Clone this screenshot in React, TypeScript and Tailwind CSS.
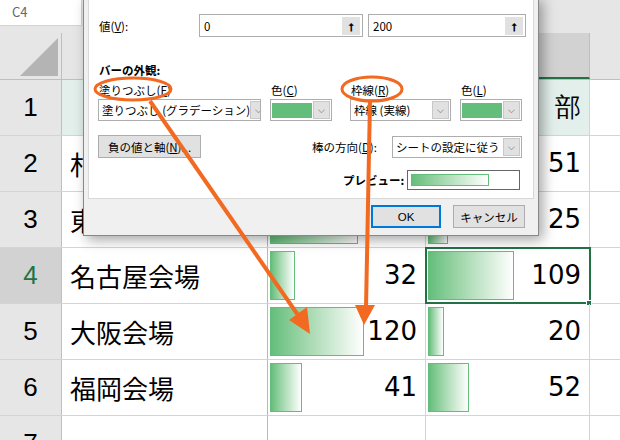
import React from "react";

const F = { fontFamily: '"Noto Sans CJK JP","Noto Sans",sans-serif' };
const rows = [
  { n: 1, a: "", b: null, c: null, hdr: true },
  { n: 2, a: "札幌会場", b: 80, c: 51 },
  { n: 3, a: "東京会場", b: 112, c: 25 },
  { n: 4, a: "名古屋会場", b: 32, c: 109 },
  { n: 5, a: "大阪会場", b: 120, c: 20 },
  { n: 6, a: "福岡会場", b: 41, c: 52 },
  { n: 7, a: "", b: null, c: null },
];

function Bar({ w }: { w: number }) {
  return (
    <div
      className="absolute left-[2px] top-[3px] bottom-[3px] border border-[#63be7b] bg-gradient-to-r from-[#63be7b] to-white"
      style={{ width: w }}
    />
  );
}

function Drop() {
  return (
    <div className="shrink-0 w-[17px] h-[18px] bg-[#e1e1e1] border border-[#c8c8c8] flex items-center justify-center text-[9px] text-[#555]">
      ⌵
    </div>
  );
}

export default function App() {
  return (
    <div className="relative w-[620px] h-[440px] overflow-hidden bg-white" style={F}>
      <div className="h-[33px] bg-[#e6e6e6] flex items-start">
        <div className="w-[82px] h-[26px] bg-white border-b border-r border-[#d4d4d4] text-[13px] text-[#666] pl-[12px] pt-[2px]">C4</div>
      </div>
      <div className="flex h-[47px] bg-[#e6e6e6] border-b border-[#bfbfbf]">
        <div className="w-[62px] border-r border-[#bfbfbf] relative">
          <div className="absolute right-[3px] bottom-[3px] w-0 h-0 border-l-[38px] border-l-transparent border-b-[38px] border-b-[#b4b4b4]" />
        </div>
        <div className="w-[206px] border-r border-[#bfbfbf]" />
        <div className="w-[158px] border-r border-[#bfbfbf]" />
        <div className="w-[164px] border-r border-[#bfbfbf] bg-[#d2d2d2] border-b-2 border-b-[#217346]" />
        <div className="flex-1" />
      </div>
      {rows.map((r) => {
        const sel = r.n === 4;
        return (
          <div key={r.n} className="flex h-[56px] border-b border-[#d4d4d4] text-[26px] text-black">
            <div className={`w-[62px] shrink-0 flex items-center justify-center border-r border-[#bfbfbf] ${sel ? "bg-[#d2d2d2] text-[#217346]" : "bg-[#e6e6e6]"}`} style={{ fontFamily: '"Liberation Sans",sans-serif' }}>
              {r.n}
            </div>
            <div className={`w-[206px] shrink-0 flex items-center pl-[8px] border-r border-[#9cc7b0] ${r.hdr ? "bg-[#e2efea]" : ""}`}>{r.a}</div>
            <div className={`w-[158px] shrink-0 relative flex items-center justify-end pr-[8px] border-r border-[#d4d4d4] ${r.hdr ? "bg-[#e2efea]" : ""}`}>
              {r.b !== null && <Bar w={Math.round((r.b * 94) / 120)} />}
              <span className="relative" style={{ fontFamily: '"DejaVu Sans",sans-serif' }}>{r.b ?? ""}</span>
            </div>
            <div className={`w-[164px] shrink-0 relative flex items-center justify-end pr-[8px] border-r border-[#d4d4d4] ${r.hdr ? "bg-[#e2efea]" : ""} ${sel ? "outline-2 outline-[#217346] -outline-offset-1" : ""}`}>
              {r.c !== null && <Bar w={Math.round((r.c * 86) / 109)} />}
              <span className="relative" style={{ fontFamily: '"DejaVu Sans",sans-serif' }}>{r.hdr ? "部" : r.c ?? ""}</span>
              {sel && <div className="absolute right-[-3px] bottom-[-3px] w-[6px] h-[6px] bg-[#217346] border border-white" />}
            </div>
            <div className="flex-1" />
          </div>
        );
      })}

      <div className="absolute left-[83px] top-[-4px] w-[456px] h-[240px] bg-[#f0f0f0] border border-[#888] shadow-[4px_4px_12px_rgba(0,0,0,0.35)] text-[11.5px] leading-[16px] text-black whitespace-nowrap">
        <div className="mx-[4px] h-[202px] bg-white border border-[#d8d8d8]">
          <div className="flex items-center mt-[16px] ml-[10px]">
            <span className="w-[100px]">値(<u>V</u>):</span>
            <div className="w-[164px] h-[23px] border border-[#adadad] flex items-center justify-between pl-[4px] pr-[2px]">
              0<div className="w-[18px] h-[18px] bg-[#e1e1e1] flex items-center justify-center text-[11px] font-bold">⭡</div>
            </div>
            <div className="w-[158px] h-[23px] ml-[5px] border border-[#adadad] flex items-center justify-between pl-[4px] pr-[2px]">
              200<div className="w-[18px] h-[18px] bg-[#e1e1e1] flex items-center justify-center text-[11px] font-bold">⭡</div>
            </div>
          </div>
          <div className="ml-[10px] mt-[25px] font-bold">バーの外観:</div>
          <div className="flex ml-[9px] mt-[4px]">
            <div className="w-[172px]">
              <div className="pl-[1px] h-[17px]">塗りつぶし(<u>F</u>)</div>
              <div className="w-[163px] h-[22px] border border-[#adadad] flex items-center justify-between pl-[3px] pr-[1px] overflow-hidden">塗りつぶし (グラデーション)<Drop /></div>
            </div>
            <div className="w-[80px]">
              <div className="pl-[1px] h-[17px]">色(<u>C</u>)</div>
              <div className="w-[62px] h-[22px] border border-[#adadad] flex items-center gap-[1px] p-[1px]"><div className="flex-1 h-[15px] bg-[#63be7b]" /><Drop /></div>
            </div>
            <div className="w-[110px]">
              <div className="pl-[1px] h-[17px]">枠線(<u>R</u>)</div>
              <div className="w-[101px] h-[22px] border border-[#adadad] flex items-center justify-between pl-[3px] pr-[1px]">枠線 (実線)<Drop /></div>
            </div>
            <div>
              <div className="pl-[1px] h-[17px]">色(<u>L</u>)</div>
              <div className="w-[62px] h-[22px] border border-[#adadad] flex items-center gap-[1px] p-[1px]"><div className="flex-1 h-[15px] bg-[#63be7b]" /><Drop /></div>
            </div>
          </div>
          <div className="flex items-center ml-[9px] mt-[14px]">
            <div className="w-[103px] h-[23px] bg-[#e1e1e1] border border-[#adadad] flex items-center justify-center">負の値と軸(<u>N</u>)...</div>
            <span className="ml-[111px] w-[80px]">棒の方向(<u>D</u>):</span>
            <div className="w-[130px] h-[22px] border border-[#adadad] flex items-center justify-between pl-[3px] pr-[1px]">シートの設定に従う<Drop /></div>
          </div>
          <div className="flex items-center ml-[254px] mt-[12px]">
            <span className="w-[64px] font-bold">プレビュー:</span>
            <div className="w-[113px] h-[20px] border border-[#666] p-[3px]">
              <div className="w-[78px] h-full border border-[#63be7b] bg-gradient-to-r from-[#63be7b] to-white" />
            </div>
          </div>
        </div>
        <div className="flex justify-end gap-[12px] mr-[13px] mt-[6px]">
          <div className="w-[70px] h-[23px] bg-[#e1e1e1] border-2 border-[#0078d7] flex items-center justify-center" style={{ fontFamily: '"Liberation Sans",sans-serif' }}>OK</div>
          <div className="w-[72px] h-[23px] bg-[#e1e1e1] border border-[#adadad] flex items-center justify-center">キャンセル</div>
        </div>
      </div>

      <svg className="absolute left-0 top-0 pointer-events-none" width="620" height="440">
        <ellipse cx="133" cy="89" rx="38" ry="11" fill="none" stroke="#f26a21" strokeWidth="3" />
        <ellipse cx="372" cy="89" rx="30" ry="12" fill="none" stroke="#f26a21" strokeWidth="3" />
        <line x1="150" y1="101" x2="300" y2="318" stroke="#f26a21" strokeWidth="4" />
        <polygon points="310,334 289,320 307,307" fill="#f26a21" />
        <line x1="370" y1="101" x2="366" y2="308" stroke="#f26a21" strokeWidth="4" />
        <polygon points="364,325 355,305 375,305" fill="#f26a21" />
      </svg>
    </div>
  );
}
